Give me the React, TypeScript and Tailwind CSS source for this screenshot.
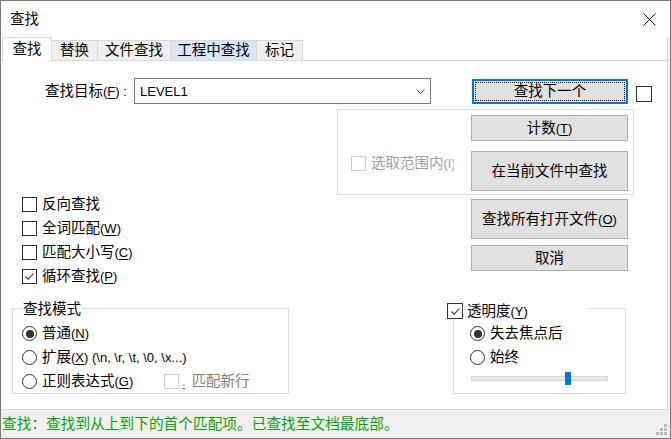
import React from 'react';

// Windows-style Notepad++ "查找" dialog

function Acc({ k }: { k: string }) {
  return (
    <span className="text-[13px]">
      (<span className="underline underline-offset-2">{k}</span>)
    </span>
  );
}

function Box({ checked = false, disabled = false, big = false }: { checked?: boolean; disabled?: boolean; big?: boolean }) {
  return (
    <span
      className={
        (big ? 'w-[16px] h-[16px] ' : 'w-[15px] h-[15px] ') +
        (disabled ? 'border-[#cccccc] ' : 'border-[#333333] ') +
        'shrink-0 border bg-white flex items-center justify-center'
      }
    >
      {checked && (
        <svg width="13" height="13" viewBox="0 0 13 13">
          <path d="M2.5 6.5 L5.2 9.2 L10.5 3.5" fill="none" stroke="#333" strokeWidth="1.1" />
        </svg>
      )}
    </span>
  );
}

function Radio({ on = false }: { on?: boolean }) {
  return (
    <span className="w-[15px] h-[15px] shrink-0 rounded-full border border-[#333333] bg-white flex items-center justify-center">
      {on && <span className="w-[8px] h-[8px] rounded-full bg-[#333333]" />}
    </span>
  );
}

function Check({ checked = false, children }: { checked?: boolean; children: React.ReactNode }) {
  return (
    <div className="flex items-center h-[15px] gap-[5px]">
      <Box checked={checked} />
      <span className="leading-none whitespace-nowrap">{children}</span>
    </div>
  );
}

function RadioRow({ on = false, children }: { on?: boolean; children: React.ReactNode }) {
  return (
    <div className="flex items-center h-[15px] gap-[5px]">
      <Radio on={on} />
      <span className="leading-none whitespace-nowrap">{children}</span>
    </div>
  );
}

function Btn({ children, tall = false }: { children: React.ReactNode; tall?: boolean }) {
  return (
    <div
      className={
        (tall ? 'h-[40px] ' : 'h-[26px] ') +
        'w-[157px] flex items-center justify-center bg-[#e1e1e1] border border-[#adadad] leading-none whitespace-nowrap'
      }
    >
      {children}
    </div>
  );
}

const tabs = [
  { label: '替换', w: 'w-[46px]', hover: false },
  { label: '文件查找', w: 'w-[73px]', hover: false },
  { label: '工程中查找', w: 'w-[86px]', hover: true },
  { label: '标记', w: 'w-[46px]', hover: false },
];

export default function App() {
  return (
    <div className="w-[671px] h-[439px] overflow-hidden border border-[#7a7a7a] bg-white flex flex-col text-[14.5px] text-black font-['Liberation_Sans','Noto_Sans_CJK_SC',sans-serif]">
      {/* Title bar */}
      <div className="h-[36px] shrink-0 flex items-center justify-between pl-[9px] pr-[14px]">
        <span className="leading-none">查找</span>
        <svg width="13" height="13" viewBox="0 0 13 13">
          <path d="M0.5 0.5 L12.5 12.5 M12.5 0.5 L0.5 12.5" stroke="#111" strokeWidth="1" />
        </svg>
      </div>

      <div className="flex-1 flex flex-col bg-[#f0f0f0] pr-[2px]">
        {/* Tabs */}
        <div className="h-[24px] shrink-0 flex items-end bg-white border-b border-[#d9d9d9] border-r">
          <div className="relative z-10 -mb-px ml-px w-[50px] h-[24px] bg-white border border-b-0 border-[#d9d9d9] flex items-center justify-center leading-none">
            查找
          </div>
          {tabs.map((t) => (
            <div
              key={t.label}
              className={
                t.w +
                (t.hover ? ' bg-[#d8e6f5]' : ' bg-[#f0f0f0]') +
                ' h-[20px] border-t border-r border-[#d9d9d9] flex items-center justify-center leading-none whitespace-nowrap'
              }
            >
              {t.label}
            </div>
          ))}
        </div>

        {/* Panel */}
        <div className="flex-1 bg-white border-r border-[#d9d9d9] flex flex-col">
          {/* Find what row */}
          <div className="mt-[17px] flex items-start h-[26px]">
            <div className="ml-[44px] w-[89px] h-[26px] flex items-center leading-none whitespace-nowrap">
              查找目标<Acc k="F" />
              <span className="text-[13px]">&nbsp;:</span>
            </div>
            <div className="w-[297px] h-[26px] border border-[#7a7a7a] flex items-center justify-between pl-[5px] pr-[5px]">
              <span className="text-[13px] leading-none">LEVEL1</span>
              <svg width="9" height="5" viewBox="0 0 9 5">
                <path d="M0.5 0.5 L4.5 4.5 L8.5 0.5" fill="none" stroke="#606060" strokeWidth="1" />
              </svg>
            </div>
            <div className="ml-[41px] mt-px w-[156px] h-[25px] border-2 border-[#0078d7] bg-[#e1e1e1] p-px">
              <div className="h-full border border-dotted border-black flex items-center justify-center leading-none">
                查找下一个
              </div>
            </div>
            <div className="ml-[8px] mt-[8px]">
              <Box big />
            </div>
          </div>

          {/* In-selection group */}
          <div className="mt-[5px] flex">
            <div className="ml-[336px] w-[297px] h-[86px] border border-[#dcdcdc] flex">
              <div className="flex-1 pl-[13px] pt-[46px]">
                <div className="flex items-center h-[15px] gap-[5px]">
                  <Box disabled />
                  <span className="w-[83px] overflow-hidden leading-none whitespace-nowrap text-[#a0a0a0]">
                    选取范围内<span className="text-[13px]">(I)</span>
                  </span>
                </div>
              </div>
              <div className="w-[157px] mr-[5px] pt-[5px] flex flex-col gap-[10px]">
                <Btn>
                  计数<Acc k="T" />
                </Btn>
                <Btn tall>在当前文件中查找</Btn>
              </div>
            </div>
          </div>

          {/* Options + buttons */}
          <div className="flex">
            <div className="w-[470px] pl-[21px] pt-[2px] flex flex-col gap-[9px]">
              <Check>反向查找</Check>
              <Check>
                全词匹配<Acc k="W" />
              </Check>
              <Check>
                匹配大小写<Acc k="C" />
              </Check>
              <Check checked>
                循环查找<Acc k="P" />
              </Check>
            </div>
            <div className="w-[157px] pt-[4px] flex flex-col gap-[6px]">
              <Btn tall>
                查找所有打开文件<Acc k="O" />
              </Btn>
              <Btn>取消</Btn>
            </div>
          </div>

          {/* Groups */}
          <div className="mt-[24px] flex">
            <div className="relative ml-[11px] w-[277px] h-[86px] border border-[#dcdcdc] pl-[9px] pt-[17px] flex flex-col gap-[9px]">
              <span className="absolute left-[9px] top-[-7px] px-px bg-white leading-none">查找模式</span>
              <RadioRow on>
                普通<Acc k="N" />
              </RadioRow>
              <RadioRow>
                扩展<Acc k="X" />
                <span className="text-[13px]"> (\n, \r, \t, \0, \x...)</span>
              </RadioRow>
              <div className="flex items-center h-[15px]">
                <div className="w-[142px] flex items-center gap-[5px]">
                  <Radio />
                  <span className="leading-none whitespace-nowrap">
                    正则表达式<Acc k="G" />
                  </span>
                </div>
                <Box disabled />
                <span className="ml-[3px] leading-none whitespace-nowrap text-[#808080]">
                  <span className="text-[13px] underline underline-offset-2">.</span>
                  <span className="ml-[6px]">匹配新行</span>
                </span>
              </div>
            </div>

            <div className="relative ml-[164px] w-[173px] h-[86px] border border-[#dcdcdc] pl-[16px] pt-[17px] flex flex-col">
              <div className="absolute left-[-7px] top-[-6px] w-[140px] h-[16px] bg-white flex items-center gap-[4px]">
                <Box checked big />
                <span className="leading-none whitespace-nowrap">
                  透明度<Acc k="Y" />
                </span>
              </div>
              <div className="flex flex-col gap-[9px]">
                <RadioRow on>失去焦点后</RadioRow>
                <RadioRow>始终</RadioRow>
              </div>
              <div className="relative mt-[11px] ml-px w-[137px] h-[5px] bg-[#e7eaea] border border-[#d6d6d6]">
                <div className="absolute left-[93px] top-[-5px] w-[6px] h-[13px] bg-[#0078d7]" />
              </div>
            </div>
          </div>
        </div>
      </div>

      {/* Status bar */}
      <div className="relative h-[29px] shrink-0 bg-[#f0f0f0] border-t border-[#dadada] flex items-center pl-px">
        <span className="leading-none whitespace-nowrap text-[14.7px] text-[#0ca00c]">
          查找：查找到从上到下的首个匹配项。已查找至文档最底部。
        </span>
        <svg className="absolute right-[3px] bottom-[3px]" width="11" height="11" viewBox="0 0 11 11">
          <g fill="#bdbdbd">
            <rect x="8" y="0" width="3" height="3" />
            <rect x="4" y="4" width="3" height="3" />
            <rect x="8" y="4" width="3" height="3" />
            <rect x="0" y="8" width="3" height="3" />
            <rect x="4" y="8" width="3" height="3" />
            <rect x="8" y="8" width="3" height="3" />
          </g>
        </svg>
      </div>
    </div>
  );
}
